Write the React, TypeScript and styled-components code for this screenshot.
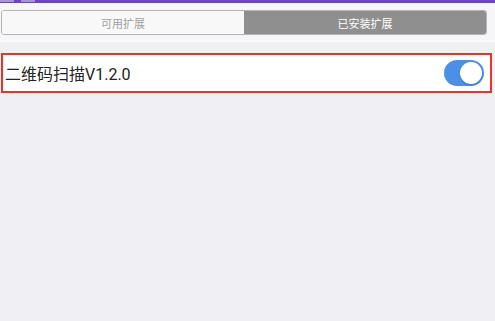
import styled, { createGlobalStyle } from "styled-components";

const GlobalStyle = createGlobalStyle`
  html, body {
    margin: 0;
    padding: 0;
    height: 100%;
    background: #efeff4;
    font-family: Roboto, "Noto Sans CJK SC", sans-serif;
  }
  #root {
    height: 100%;
  }
`;

const Page = styled.div`
  height: 100%;
  display: flex;
  flex-direction: column;
`;

const TopBar = styled.div`
  height: 3px;
  background: #6a45c2;
  display: flex;
  gap: 7px;
`;

const TopTab = styled.span`
  width: 14px;
  height: 2px;
  background: #a497cf;
`;

const SegmentArea = styled.div`
  background: #f6f6f8;
  padding: 7px 8px 5px 1px;
  border-bottom: 2px solid #fafafa;
`;

const Segment = styled.div`
  display: grid;
  grid-template-columns: 1fr 1fr;
  height: 23px;
  border: 1px solid #b4b4b4;
  border-radius: 3px;
  overflow: hidden;
`;

const SegButton = styled.div<{ $active?: boolean }>`
  display: flex;
  align-items: center;
  justify-content: center;
  font-size: 11px;
  color: ${(p) => (p.$active ? "#ffffff" : "#a0a0a0")};
  background: ${(p) => (p.$active ? "#8f8f8f" : "#f8f8f8")};
`;

const List = styled.div`
  padding: 11px 3px 0 1px;
`;

const Row = styled.div`
  height: 36px;
  border: 2px solid #e6352b;
  background: #ffffff;
  display: flex;
  align-items: center;
  justify-content: space-between;
  padding: 0 6px 0 2px;
`;

const Title = styled.span`
  font-size: 16px;
  color: #222;
`;

const Toggle = styled.div<{ $on?: boolean }>`
  width: 40px;
  height: 26px;
  border-radius: 13px;
  background: ${(p) => (p.$on ? "#4b8fe6" : "#ddd")};
  display: flex;
  align-items: center;
  justify-content: ${(p) => (p.$on ? "flex-end" : "flex-start")};
  padding: 2px;
  box-sizing: border-box;
`;

const Knob = styled.div`
  width: 22px;
  height: 22px;
  border-radius: 50%;
  background: #fff;
  box-shadow: 0 1px 2px rgba(0, 0, 0, 0.2);
`;

export default function App() {
  return (
    <>
      <GlobalStyle />
      <Page>
        <TopBar>
          <TopTab />
          <TopTab />
        </TopBar>
        <SegmentArea>
          <Segment>
            <SegButton>可用扩展</SegButton>
            <SegButton $active>已安装扩展</SegButton>
          </Segment>
        </SegmentArea>
        <List>
          <Row>
            <Title>二维码扫描V1.2.0</Title>
            <Toggle $on>
              <Knob />
            </Toggle>
          </Row>
        </List>
      </Page>
    </>
  );
}
